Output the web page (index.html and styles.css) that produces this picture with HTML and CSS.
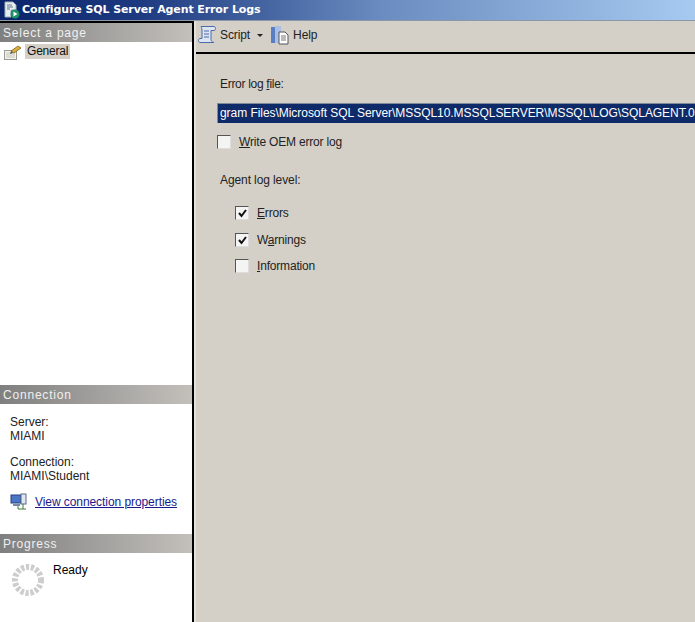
FILE: index.html
```html
<!DOCTYPE html>
<html lang="en">
<head>
<meta charset="utf-8">
<title>Configure SQL Server Agent Error Logs</title>
<link rel="stylesheet" href="styles.css">
</head>
<body>
<div class="window">
  <header class="titlebar">
    <svg class="title-icon" width="18" height="18" viewBox="0 0 18 18">
      <path d="M2 1h8l3 3v5H8v7H2z" fill="#e8eef0" stroke="#9fb0b8"/>
      <path d="M4 4h5M4 6h6M4 8h3" stroke="#5a7a8a"/>
      <circle cx="12" cy="13" r="4.5" fill="#1f8f6a"/>
      <path d="M10.5 10.5l4 2.5-4 2.5z" fill="#fff"/>
    </svg>
    <span class="title-text">Configure SQL Server Agent Error Logs</span>
  </header>
  <div class="body">
    <aside class="sidebar">
      <h2 class="band">Select a page</h2>
      <div class="pages">
        <div class="page-row">
          <svg class="page-icon" width="20" height="16" viewBox="0 0 20 16">
            <rect x="1.5" y="6.500" width="12" height="9" fill="#f4f4ee" stroke="#9a9a94"/>
            <path d="M3 9h9M3 11h9M3 13h9" stroke="#c4c4bc"/>
            <path d="M8 7l7-5 3 2-7 5z" fill="#d8b040" stroke="#80601a" stroke-width=".8"/>
            <path d="M8 7l-1 3 3-1z" fill="#555"/>
          </svg>
          <span class="page-name">General</span>
        </div>
      </div>
      <h2 class="band">Connection</h2>
      <div class="connection">
        <div class="info">Server:<br>MIAMI</div>
        <div class="info">Connection:<br>MIAMI\Student</div>
        <div class="conn-link">
          <svg width="18" height="18" viewBox="0 0 18 18">
            <rect x="1" y="2" width="10" height="8" fill="#4a76c8" stroke="#24407c"/>
            <rect x="11" y="1" width="5" height="10" fill="#dfe6f2" stroke="#5a6a8a"/>
            <path d="M3 11h7v2H3z" fill="#7a8aa8"/>
            <path d="M8 13v3h8M13 11v5" stroke="#3c7c3c" fill="none"/>
          </svg>
          <a class="link" href="#">View connection properties</a>
        </div>
      </div>
      <h2 class="band">Progress</h2>
      <div class="progress">
        <svg class="spinner" width="34" height="34" viewBox="0 0 34 34">
          <circle cx="17" cy="17" r="13" fill="none" stroke="#cdcdcd" stroke-width="6" stroke-dasharray="3.200 1.700"/>
        </svg>
        <span class="ready">Ready</span>
      </div>
    </aside>
    <main class="content">
      <div class="toolbar">
        <svg width="20" height="20" viewBox="0 0 20 20">
          <path d="M4 1.500h13c2 0 2 4 0 4h-3v9c0 1 1 3 3 3H3c-2 0-2-4 0-4h2V5C5 3 4 1.500 4 1.500z" fill="#dde5f2" stroke="#4a6aa8"/>
          <path d="M7 6h5M7 9h5M7 12h5" stroke="#4a6aa8"/>
        </svg>
        <span class="tool-label">Script</span>
        <span class="caret"></span>
        <svg class="help-icon" width="20" height="20" viewBox="0 0 20 20">
          <rect x="1" y="2" width="6" height="16" fill="#5a7ec4"/>
          <rect x="5" y="1" width="6" height="17" fill="#a8bee4"/>
          <path d="M9 7h6l3 3v9H9z" fill="#fff" stroke="#555"/>
          <path d="M11 11h5M11 13h5M11 15h5" stroke="#777"/>
        </svg>
        <span class="tool-label">Help</span>
      </div>
      <form class="form">
        <div class="field-label file-label">Error log <u>f</u>ile:</div>
        <div class="path">gram Files\Microsoft SQL Server\MSSQL10.MSSQLSERVER\MSSQL\LOG\SQLAGENT.0</div>
        <label class="check oem"><span class="box"></span><span><u>W</u>rite OEM error log</span></label>
        <div class="field-label level">Agent log level:</div>
        <div class="levels">
          <label class="check"><span class="box"><svg width="13" height="13" viewBox="0 0 13 13"><path d="M3 6l2.500 3L10 3" fill="none" stroke="#111" stroke-width="2"/></svg></span><span><u>E</u>rrors</span></label>
          <label class="check"><span class="box"><svg width="13" height="13" viewBox="0 0 13 13"><path d="M3 6l2.500 3L10 3" fill="none" stroke="#111" stroke-width="2"/></svg></span><span>W<u>a</u>rnings</span></label>
          <label class="check"><span class="box"></span><span><u>I</u>nformation</span></label>
        </div>
      </form>
    </main>
  </div>
</div>
</body>
</html>
```
FILE: styles.css
```css
* { box-sizing: border-box; }
html, body { margin: 0; height: 100%; overflow: hidden; }
body { font: 12px/14px "Liberation Sans", Arial, sans-serif; color: #222; background: #d4d0c8; }
.window { width: 695px; height: 622px; display: flex; flex-direction: column; }
.titlebar {
  height: 21px; flex: none; display: flex; align-items: center; gap: 1px; padding-left: 3px;
  background: linear-gradient(90deg, #0a246a 0%, #1d3a80 20%, #6a8cc0 55%, #a6caf0 100%);
  border-bottom: 1px solid #8d96a8;
}
.title-text { font: bold 11px/14px "DejaVu Sans", sans-serif; color: #fff; letter-spacing: -0.1px; white-space: nowrap; }
.body { flex: 1; display: flex; min-height: 0; }
.sidebar {
  width: 194px; flex: none; display: flex; flex-direction: column;
  background: #fff; border-right: 2px solid #000; border-top: 2px solid #000;
}
.band {
  margin: 0; height: 19px; flex: none; padding: 1px 0 0 3px;
  font: 12px/19px "Liberation Sans", sans-serif; letter-spacing: .8px; color: #f0f0f0;
  background: linear-gradient(90deg, #7f7f7f, #c3c0bb);
}
.pages { height: 343px; flex: none; padding: 1px 0 0 3px; }
.page-row { display: flex; align-items: center; gap: 2px; height: 17px; }
.page-name { background: #d4d0c8; padding: 0 2px; line-height: 15px; color: #111; letter-spacing: -.2px; }
.connection { height: 130px; flex: none; padding: 11px 0 0 10px; color: #222; }
.info { margin-bottom: 12px; }
.conn-link { display: flex; align-items: center; gap: 7px; margin-top: -2px; }
.link { color: #1a1a8c; text-decoration: underline; letter-spacing: -.07px; }
.progress { flex: 1; display: flex; align-items: flex-start; padding: 10px 0 0 11px; }
.spinner { flex: none; }
.ready { margin-left: 8px; color: #000; }
.content { flex: 1; min-width: 0; display: flex; flex-direction: column; border-left: 2px solid #e4e1da; background: #d4d0c8; }
.toolbar {
  height: 33px; flex: none; display: flex; align-items: center; padding: 0 0 3px 1px;
  border-bottom: 2px solid #000;
}
.tool-label { margin-left: 3px; letter-spacing: -.1px; }
.caret { width: 0; height: 0; margin: 1px 0 0 7px; border: 3px solid transparent; border-top: 3px solid #222; border-bottom: 0; }
.help-icon { margin-left: 7px; }
.form { flex: 1; min-width: 0; padding: 23px 0 0 24px; }
.field-label { height: 14px; color: #222; letter-spacing: -.1px; }
.file-label { letter-spacing: -.3px; }
.path {
  margin: 12px 0 0 -3px; height: 20px; padding-left: 2px; overflow: hidden; white-space: nowrap;
  background: #0e2a68; color: #fff; line-height: 18px; border-top: 1px solid #7f8a98;
  border-left: 1px solid #7f8a98; letter-spacing: -.05px;
}
.check { display: flex; align-items: center; height: 14px; gap: 8px; letter-spacing: -.18px; }
.oem { margin: 12px 0 0 -3px; }
.box { width: 14px; height: 14px; flex: none; background: #f4f4f2; border: 1px solid; border-color: #555 #ddd #ddd #555; display: block; }
.box svg { display: block; }
.level { margin-top: 24px; }
.levels { display: flex; flex-direction: column; gap: 12.500px; margin: 19px 0 0 15px; }
```
